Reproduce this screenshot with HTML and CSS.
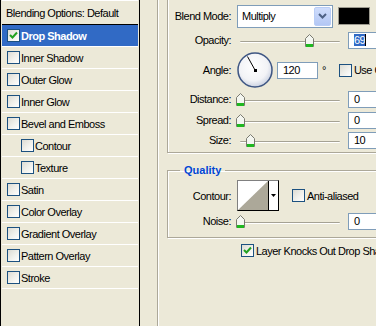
FILE: index.html
```html
<!DOCTYPE html>
<html lang="en">
<head>
  <meta charset="UTF-8">
  <title>Layer Style - Drop Shadow</title>
  <link rel="stylesheet" href="styles.css">
</head>
<body>
  <div class="dialog">
    <ul class="styles-list">
      <li class="list-head">Blending Options: Default</li>
      <li class="selected"><span class="check"><svg width="11" height="11"><path d="M2 5 L4.5 7.5 L9 2.5" stroke="#21A121" stroke-width="2" fill="none"/></svg></span>Drop Shadow</li>
      <li><span class="check"></span>Inner Shadow</li>
      <li><span class="check"></span>Outer Glow</li>
      <li><span class="check"></span>Inner Glow</li>
      <li><span class="check"></span>Bevel and Emboss</li>
      <li class="sub"><span class="check"></span>Contour</li>
      <li class="sub"><span class="check"></span>Texture</li>
      <li><span class="check"></span>Satin</li>
      <li><span class="check"></span>Color Overlay</li>
      <li><span class="check"></span>Gradient Overlay</li>
      <li><span class="check"></span>Pattern Overlay</li>
      <li><span class="check"></span>Stroke</li>
      <li class="filler"></li>
    </ul>

    <div class="options">
      <fieldset class="structure">
        <div class="row row-blend">
          <label>Blend Mode:</label>
          <div class="select">Multiply<span class="select-btn"><svg width="9" height="6"><path d="M1 1 L4.5 4.5 L8 1" stroke="#4D6185" stroke-width="2" fill="none"/></svg></span></div>
          <div class="swatch"></div>
        </div>
        <div class="row row-24">
          <label>Opacity:</label>
          <div class="slider"><div class="track"></div><svg class="thumb" style="left: 69px" width="9" height="13"><path d="M0.5 12.5 V4.5 L4.5 0.5 L8.5 4.5 V12.5 Z" fill="#F4F6F0" stroke="#7A7A70"/><rect x="1" y="10" width="7" height="3" fill="#1FB71F"/></svg></div>
          <div class="field"><span class="sel">69</span><span class="caret"></span></div>
        </div>
        <div class="row row-angle">
          <label>Angle:</label>
          <svg class="dial" width="36" height="36">
            <defs>
              <radialGradient id="dialFill" cx="45%" cy="40%" r="60%">
                <stop offset="0" stop-color="#FFFFFF"/>
                <stop offset="0.7" stop-color="#F2F3F6"/>
                <stop offset="1" stop-color="#CCD3E2"/>
              </radialGradient>
            </defs>
            <circle cx="18" cy="18" r="17" fill="url(#dialFill)" stroke="#3E5683" stroke-width="1.5"/>
            <line x1="18" y1="18" x2="10.5" y2="4.5" stroke="#000" stroke-width="1"/>
            <rect x="17" y="17" width="3" height="3" fill="#000"/>
          </svg>
          <div class="field field-angle">120</div>
          <span class="degree">°</span>
          <span class="check check-global"></span><span class="check-label">Use Global Light</span>
        </div>
        <div class="row row-22">
          <label>Distance:</label>
          <div class="slider"><div class="track"></div><svg class="thumb" style="left: 0px" width="9" height="13"><path d="M0.5 12.5 V4.5 L4.5 0.5 L8.5 4.5 V12.5 Z" fill="#F4F6F0" stroke="#7A7A70"/><rect x="1" y="10" width="7" height="3" fill="#1FB71F"/></svg></div>
          <div class="field">0</div>
        </div>
        <div class="row row-20">
          <label>Spread:</label>
          <div class="slider"><div class="track"></div><svg class="thumb" style="left: 0px" width="9" height="13"><path d="M0.5 12.5 V4.5 L4.5 0.5 L8.5 4.5 V12.5 Z" fill="#F4F6F0" stroke="#7A7A70"/><rect x="1" y="10" width="7" height="3" fill="#1FB71F"/></svg></div>
          <div class="field">0</div>
        </div>
        <div class="row row-20">
          <label>Size:</label>
          <div class="slider"><div class="track"></div><svg class="thumb" style="left: 10px" width="9" height="13"><path d="M0.5 12.5 V4.5 L4.5 0.5 L8.5 4.5 V12.5 Z" fill="#F4F6F0" stroke="#7A7A70"/><rect x="1" y="10" width="7" height="3" fill="#1FB71F"/></svg></div>
          <div class="field">10</div>
        </div>
      </fieldset>

      <fieldset class="quality">
        <legend>Quality</legend>
        <div class="row row-contour">
          <label>Contour:</label>
          <div class="contour">
            <svg width="30" height="29"><rect width="30" height="29" fill="#fff"/><path d="M0 29 L30 0 V29 Z" fill="#ACA899"/></svg>
            <span class="contour-btn"><svg width="5" height="3"><path d="M0 0 H5 L2.5 3 Z" fill="#000"/></svg></span>
          </div>
          <span class="check check-anti"></span><span class="check-label">Anti-aliased</span>
        </div>
        <div class="row row-20">
          <label>Noise:</label>
          <div class="slider"><div class="track"></div><svg class="thumb" style="left: 0px" width="9" height="13"><path d="M0.5 12.5 V4.5 L4.5 0.5 L8.5 4.5 V12.5 Z" fill="#F4F6F0" stroke="#7A7A70"/><rect x="1" y="10" width="7" height="3" fill="#1FB71F"/></svg></div>
          <div class="field">0</div>
        </div>
      </fieldset>

      <div class="knockout">
        <span class="check"><svg width="11" height="11"><path d="M2 5 L4.5 7.5 L9 2.5" stroke="#21A121" stroke-width="2" fill="none"/></svg></span>
        <span class="check-label">Layer Knocks Out Drop Shadow</span>
      </div>
    </div>
  </div>
</body>
</html>
```

FILE: styles.css
```css
body {
  margin: 0;
  background: #ECE9D8;
  font-family: "Liberation Sans", Arial, sans-serif;
  font-size: 11px;
  letter-spacing: -0.5px;
  color: #000;
  overflow: hidden;
}
.dialog {
  display: flex;
  height: 326px;
  overflow: hidden;
}

/* style list on the left */
.styles-list {
  list-style: none;
  margin: 0;
  padding: 0 1px;
  width: 136px;
  flex: none;
  border-left: 1px solid #000;
  border-right: 1px solid #000;
  display: flex;
  flex-direction: column;
}
.styles-list li {
  height: 21px;
  border-bottom: 1px solid #fff;
  display: flex;
  align-items: center;
  padding-left: 5px;
  white-space: nowrap;
}
.styles-list .list-head {
  height: 23px;
  border-top: 1px solid #fff;
  border-bottom: 1px solid #000;
  padding-left: 4px;
}
.styles-list .selected {
  background: #316AC5;
  color: #fff;
  font-weight: bold;
}
.styles-list .sub {
  padding-left: 19px;
}
.styles-list .filler {
  flex: 1;
  border-bottom: none;
}

.check {
  width: 13px;
  height: 13px;
  box-sizing: border-box;
  border: 1px solid #1C5180;
  background: linear-gradient(135deg, #DCDBD3 0%, #EFEFEA 50%, #FFFFFF 100%);
  margin-right: 1px;
  flex: none;
  display: flex;
  align-items: center;
  justify-content: center;
}
.check-label {
  margin-left: 1px;
  white-space: nowrap;
}

/* option panel */
.options {
  flex: 1;
  margin-left: 17px;
  border-left: 1px solid #ACA899;
  box-shadow: inset 1px 0 #fff;
  padding-left: 9px;
}
fieldset {
  margin: 0;
  border: 1px solid #ACA899;
  box-shadow: inset 1px 1px #fff, 1px 1px #fff;
  width: 260px;
  min-width: 0;
}
.structure {
  margin-top: -10px;
  padding: 13px 0 2px;
}
.quality {
  margin-top: 11px;
  padding: 3px 0 6px;
}
legend {
  margin-left: 12px;
  padding: 0 4px;
  font-weight: bold;
  color: #0046D5;
  line-height: 13px;
  letter-spacing: 0;
}

.row {
  display: flex;
  align-items: center;
  white-space: nowrap;
}
.row > label {
  width: 63px;
  flex: none;
  text-align: right;
}
.row-blend, .row-24 { height: 24px; }
.row-angle { height: 36px; }
.row-22 { height: 22px; }
.row-20 { height: 20px; }
.row-contour { height: 31px; }

.select {
  margin-left: 6px;
  width: 96px;
  height: 23px;
  box-sizing: border-box;
  border: 1px solid #7F9DB9;
  background: #fff;
  padding: 1px 1px 1px 4px;
  display: flex;
  align-items: center;
  flex: none;
}
.select-btn {
  margin-left: auto;
  width: 17px;
  height: 100%;
  box-sizing: border-box;
  border: 1px solid #B9CDF6;
  border-radius: 2px;
  background: linear-gradient(#CFDDFC, #B3C7F4);
  display: flex;
  align-items: center;
  justify-content: center;
}
.swatch {
  margin-left: 5px;
  width: 32px;
  height: 18px;
  box-sizing: border-box;
  border: 1px solid #9D9B90;
  background: #000;
  flex: none;
}

.slider {
  position: relative;
  width: 109px;
  height: 13px;
  margin-left: 5px;
  flex: none;
}
.track {
  position: absolute;
  left: 4px;
  right: 5px;
  top: 7px;
  height: 1px;
  border-top: 1px solid #A5A294;
  background: #fff;
  border-radius: 1px;
}
.thumb {
  position: absolute;
  top: 0;
}

.field {
  margin-left: 3px;
  width: 40px;
  height: 17px;
  box-sizing: border-box;
  border: 1px solid #7F9DB9;
  background: #fff;
  padding-left: 5px;
  display: flex;
  align-items: center;
  flex: none;
}
.field .sel {
  background: #316AC5;
  color: #fff;
  line-height: 12px;
}
.field .caret {
  width: 1px;
  height: 12px;
  background: #000;
}

.dial {
  margin-left: 6px;
  flex: none;
}
.field-angle {
  margin-left: 4px;
  width: 41px;
}
.degree {
  margin-left: 4px;
}
.check-global {
  margin-left: 13px;
}

.contour {
  margin-left: 6px;
  width: 42px;
  height: 31px;
  box-sizing: border-box;
  border: 1px solid;
  border-color: #808080 #000 #000 #808080;
  background: #fff;
  display: flex;
  flex: none;
}
.contour-btn {
  flex: 1;
  border-left: 1px solid #000;
  display: flex;
  align-items: center;
  justify-content: center;
}
.check-anti {
  margin-left: 13px;
}

.knockout {
  display: flex;
  align-items: center;
  height: 13px;
  margin: 6px 0 0 74px;
}
```
